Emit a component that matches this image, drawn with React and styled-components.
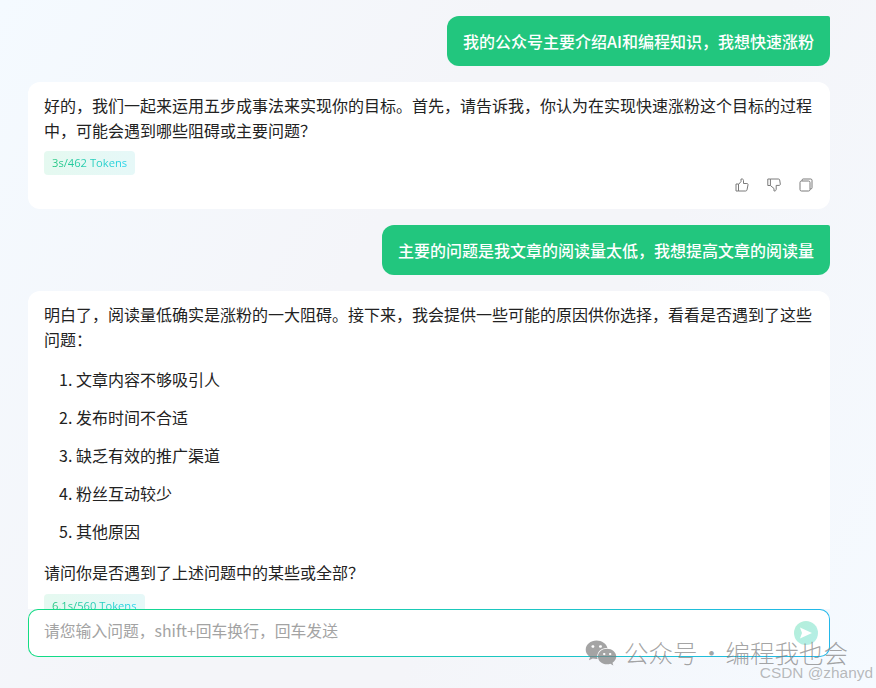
import React from 'react';
import styled, { createGlobalStyle } from 'styled-components';
import { FaWeixin } from 'react-icons/fa';

const GlobalStyle = createGlobalStyle`
  html, body {
    margin: 0;
    padding: 0;
    height: 100%;
  }
  body {
    font-family: "Noto Sans CJK SC", "Noto Sans", sans-serif;
    color: #222;
  }
`;

const Page = styled.div`
  position: relative;
  width: 876px;
  height: 688px;
  overflow: hidden;
  display: flex;
  flex-direction: column;
  background: linear-gradient(120deg, #f4faff 0%, #f4f5f9 40%, #f4f5f9 62%, #f5faff 100%);
`;

const Messages = styled.div`
  height: 609px;
  overflow: hidden;
  padding: 16px 46px 0 28px;
  display: flex;
  flex-direction: column;
  gap: 16px;
  box-sizing: border-box;
`;

const UserBubble = styled.div`
  align-self: flex-end;
  height: 50px;
  padding: 0 16px;
  display: flex;
  align-items: center;
  flex-shrink: 0;
  background: #22c67e;
  color: #fff;
  font-size: 16px;
  font-weight: 500;
  border-radius: 12px 2px 12px 12px;
`;

const Card = styled.div`
  background: #fff;
  border-radius: 12px;
  padding: 11px 16px 17px;
  flex-shrink: 0;
`;

const Paragraph = styled.p`
  margin: 0;
  font-size: 16px;
  line-height: 24.5px;
`;

const Steps = styled.ol`
  margin: 16px 0 0;
  padding: 0 0 0 32px;
  font-size: 16px;
  line-height: 24px;
`;

const Step = styled.li`
  margin-bottom: 14px;
`;

const LastParagraph = styled(Paragraph)`
  margin-top: 17px;
`;

const Tag = styled.div`
  display: inline-block;
  margin-top: 9px;
  padding: 0 8px;
  height: 24px;
  line-height: 24px;
  font-family: "Open Sans", sans-serif;
  font-size: 11.2px;
  border-radius: 4px;
  background: linear-gradient(90deg, #e5f9f0, #e6f8f8);
`;

const TagText = styled.span`
  background: linear-gradient(90deg, #22c67e, #22d3ee);
  -webkit-background-clip: text;
  background-clip: text;
  color: transparent;
`;

const Actions = styled.div`
  display: flex;
  justify-content: flex-end;
  gap: 18px;
  margin-top: 3px;
  padding-right: 1px;
`;

const ActionIcon = styled.svg`
  width: 14px;
  height: 14px;
  fill: none;
  stroke: #7a7a7a;
  stroke-width: 1;
`;

const InputBox = styled.div`
  margin: 0 46px 0 28px;
  height: 48px;
  box-sizing: border-box;
  flex-shrink: 0;
  display: flex;
  align-items: center;
  justify-content: space-between;
  padding: 0 11px 0 15px;
  border: 1px solid transparent;
  border-radius: 10px;
  background:
    linear-gradient(#fff, #fff) padding-box,
    linear-gradient(90deg, #12dc84, #22b8ea) border-box;
`;

const Placeholder = styled.span`
  font-size: 15.8px;
  color: #a3a3a3;
  margin-top: -5px;
`;

const SendButton = styled.div`
  width: 24px;
  height: 24px;
  border-radius: 50%;
  background: linear-gradient(135deg, #b4efd9, #b4eee8);
  display: flex;
  align-items: center;
  justify-content: center;
`;

const Watermark = styled.div`
  position: absolute;
  left: 585px;
  top: 637px;
  display: flex;
  align-items: center;
  gap: 7px;
  color: rgba(125, 125, 125, 0.7);
  font-size: 24.5px;
  font-weight: 300;
  line-height: 32px;
  white-space: nowrap;
`;

const Dot = styled.span`
  display: inline-block;
  width: 28px;
  text-align: center;
`;

const Credit = styled.div`
  position: absolute;
  right: 3px;
  top: 664px;
  font-family: "Liberation Sans", sans-serif;
  font-size: 15.4px;
  line-height: 18px;
  color: rgba(130, 130, 130, 0.55);
`;

const ThumbUp = () => (
  <ActionIcon viewBox="0 0 14 14">
    <path d="M1 6h2.500v7H1z" />
    <path d="M3.500 6.500 6 3.500V1h1.200c.9 0 1.300.8 1.300 1.600V5.500h3.400c.8 0 1.300.6 1.100 1.400l-1 5c-.2.7-.6 1.100-1.300 1.100H3.500" />
  </ActionIcon>
);

const ThumbDown = () => (
  <ActionIcon viewBox="0 0 14 14">
    <path d="M.8 1h2.600v6.500H.8z" />
    <path d="M3.400 1h8c.7 0 1.200.4 1.300 1l.6 4c.1.8-.4 1.400-1.200 1.400H9.200v3.800c0 .9-.6 1.800-1.600 1.800H7v-2.500L3.400 7.500" />
  </ActionIcon>
);

const Copy = () => (
  <ActionIcon viewBox="0 0 14 14">
    <rect x="1" y="3" width="10" height="10" rx="1.500" />
    <path d="M3 3V2.200c0-.7.5-1.200 1.200-1.200h7.600c.7 0 1.200.5 1.200 1.200v7.600c0 .7-.5 1.200-1.200 1.200H11" />
  </ActionIcon>
);

const steps = ['文章内容不够吸引人', '发布时间不合适', '缺乏有效的推广渠道', '粉丝互动较少', '其他原因'];

const App = () => (
  <Page>
    <GlobalStyle />
    <Messages>
      <UserBubble>我的公众号主要介绍AI和编程知识，我想快速涨粉</UserBubble>
      <Card>
        <Paragraph>好的，我们一起来运用五步成事法来实现你的目标。首先，请告诉我，你认为在实现快速涨粉这个目标的过程中，可能会遇到哪些阻碍或主要问题？</Paragraph>
        <Tag><TagText>3s/462 Tokens</TagText></Tag>
        <Actions>
          <ThumbUp />
          <ThumbDown />
          <Copy />
        </Actions>
      </Card>
      <UserBubble>主要的问题是我文章的阅读量太低，我想提高文章的阅读量</UserBubble>
      <Card>
        <Paragraph>明白了，阅读量低确实是涨粉的一大阻碍。接下来，我会提供一些可能的原因供你选择，看看是否遇到了这些问题：</Paragraph>
        <Steps>
          {steps.map((s) => <Step key={s}>{s}</Step>)}
        </Steps>
        <LastParagraph>请问你是否遇到了上述问题中的某些或全部？</LastParagraph>
        <Tag><TagText>6.1s/560 Tokens</TagText></Tag>
      </Card>
    </Messages>
    <InputBox>
      <Placeholder>请您输入问题，shift+回车换行，回车发送</Placeholder>
      <SendButton>
        <svg width="14" height="14" viewBox="0 0 14 14"><path d="M1 1.500 13 7 1 12.500 3 7z" fill="#fff" /></svg>
      </SendButton>
    </InputBox>
    <Watermark>
      <FaWeixin size={32} />
      <span>公众号<Dot>·</Dot>编程我也会</span>
    </Watermark>
    <Credit>CSDN @zhanyd</Credit>
  </Page>
);

export default App;
